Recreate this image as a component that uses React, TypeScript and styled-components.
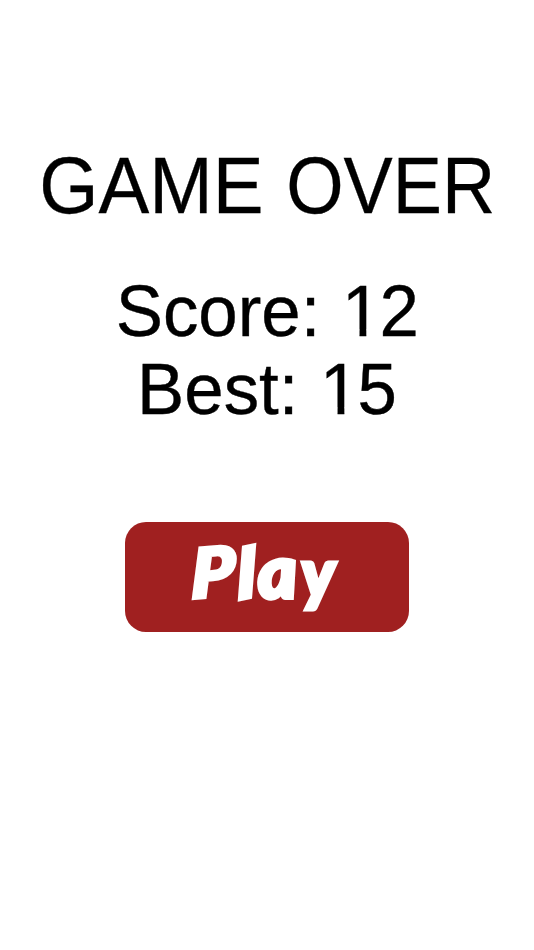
import React from 'react';
import styled, { createGlobalStyle } from 'styled-components';

const GlobalStyle = createGlobalStyle`
  * { box-sizing: border-box; }
  body { margin: 0; background: #fff; }
`;

const Screen = styled.main`
  display: flex;
  flex-direction: column;
  align-items: center;
  height: 950px;
  padding-top: 144px;
  overflow: hidden;
  color: #000;
  font-family: "Liberation Sans", Helvetica, Arial, sans-serif;
`;

const Title = styled.h1`
  margin: 0;
  padding-left: 6px;
  font-size: 80px;
  font-weight: 400;
  line-height: 84px;
  white-space: nowrap;
  -webkit-text-stroke: 0.3px #000;
`;

const Word = styled.span<{ $stretch: number; $origin: string }>`
  display: inline-block;
  transform: scaleX(${({ $stretch }) => $stretch});
  transform-origin: ${({ $origin }) => $origin};
`;

const Scores = styled.div`
  display: flex;
  flex-direction: column;
  align-items: center;
  margin-top: 44px;
`;

const ScoreLine = styled.p`
  margin: 0;
  font-size: 73px;
  line-height: 78px;
  white-space: nowrap;
  transform: scaleX(0.97);
  -webkit-text-stroke: 0.4px #000;
`;

/* The numeral one is trimmed to a plain stem without a foot. */
const PlainOne = styled.span`
  display: inline-block;
  transform: translateX(2px);
  clip-path: polygon(
    0 0, 100% 0, 100% 57.5px, 25.1px 57.5px,
    25.1px 100%, 18.1px 100%, 18.1px 57.5px, 0 57.5px
  );
`;

const PlayButton = styled.button`
  display: flex;
  align-items: center;
  justify-content: center;
  width: 284px;
  height: 110px;
  margin-top: 94px;
  padding: 0 6px 12px 0;
  border: 0;
  border-radius: 21px;
  background: #a02020;
  color: #fff;
  font: italic 900 69px Lato, sans-serif;
  -webkit-text-stroke: 4px #fff;
  paint-order: stroke;
`;

const Letter = styled.span<{ $width: number; $transform: string }>`
  display: flex;
  justify-content: center;
  width: ${({ $width }) => $width}px;
  transform: ${({ $transform }) => $transform};
`;

export default function App() {
  return (
    <>
      <GlobalStyle />
      <Screen>
        <Title>
          <Word $stretch={0.952} $origin="99% 50%">GAME</Word>{' '}
          <Word $stretch={0.922} $origin="1% 50%">OVER</Word>
        </Title>
        <Scores>
          <ScoreLine>Score: <PlainOne>1</PlainOne>2</ScoreLine>
          <ScoreLine>Best: <PlainOne>1</PlainOne>5</ScoreLine>
        </Scores>
        <PlayButton aria-label="Play">
          <Letter $width={44} $transform="translateY(-1px) skewY(-5deg) scale(1.06, 0.98)">P</Letter>
          <Letter $width={21} $transform="translateX(1px) skewX(3deg) skewY(-12deg) scale(1.08, 0.98)">l</Letter>
          <Letter $width={42} $transform="translateY(-2px) skewX(4deg) scale(1.08, 1.06)">a</Letter>
          <Letter $width={40} $transform="skewX(3deg) scaleX(0.98)">y</Letter>
        </PlayButton>
      </Screen>
    </>
  );
}
